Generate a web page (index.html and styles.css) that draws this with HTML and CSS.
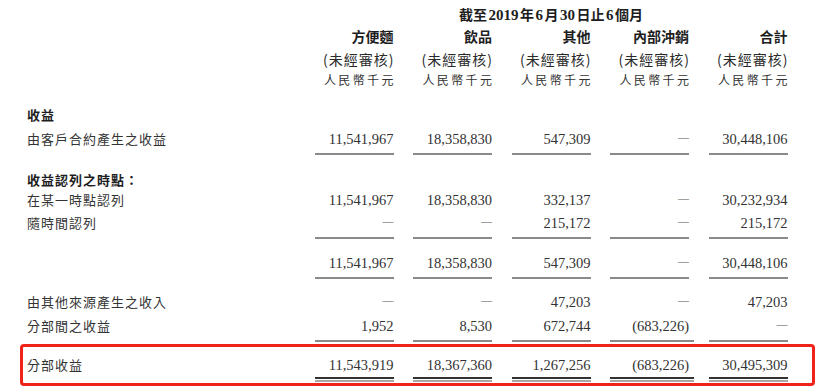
FILE: index.html
```html
<!DOCTYPE html>
<html lang="zh-Hant">
<head>
<meta charset="utf-8">
<title>分部收益</title>
<link rel="stylesheet" href="styles.css">
</head>
<body>
<div class="sheet">
  <div class="row r-title">
    <div class="title">截至<span class="num">2019</span>年<span class="num">6</span>月<span class="num">30</span>日止<span class="num">6</span>個月</div>
  </div>
  <div class="row r-h1">
    <div></div>
    <div class="hd">方便麵</div>
    <div class="hd">飲品</div>
    <div class="hd">其他</div>
    <div class="hd">內部沖銷</div>
    <div class="hd">合計</div>
  </div>
  <div class="row r-h2">
    <div></div>
    <div class="sub">(未經審核)</div>
    <div class="sub">(未經審核)</div>
    <div class="sub">(未經審核)</div>
    <div class="sub">(未經審核)</div>
    <div class="sub">(未經審核)</div>
  </div>
  <div class="row r-h3">
    <div></div>
    <div class="unit">人民幣千元</div>
    <div class="unit">人民幣千元</div>
    <div class="unit">人民幣千元</div>
    <div class="unit">人民幣千元</div>
    <div class="unit">人民幣千元</div>
  </div>

  <div class="row r1">
    <div class="lbl b">收益</div>
  </div>
  <div class="row r2">
    <div class="lbl">由客戶合約產生之收益</div>
    <div class="n u">11,541,967</div>
    <div class="n u">18,358,830</div>
    <div class="n u">547,309</div>
    <div class="n u"><span class="dash">—</span></div>
    <div class="n u">30,448,106</div>
  </div>

  <div class="row r3">
    <div class="lbl b">收益認列之時點：</div>
  </div>
  <div class="row r4">
    <div class="lbl">在某一時點認列</div>
    <div class="n">11,541,967</div>
    <div class="n">18,358,830</div>
    <div class="n">332,137</div>
    <div class="n"><span class="dash">—</span></div>
    <div class="n">30,232,934</div>
  </div>
  <div class="row r5">
    <div class="lbl">隨時間認列</div>
    <div class="n u"><span class="dash">—</span></div>
    <div class="n u"><span class="dash">—</span></div>
    <div class="n u">215,172</div>
    <div class="n u"><span class="dash">—</span></div>
    <div class="n u">215,172</div>
  </div>

  <div class="row r6">
    <div class="lbl"></div>
    <div class="n u">11,541,967</div>
    <div class="n u">18,358,830</div>
    <div class="n u">547,309</div>
    <div class="n u"><span class="dash">—</span></div>
    <div class="n u">30,448,106</div>
  </div>

  <div class="row r7">
    <div class="lbl">由其他來源產生之收入</div>
    <div class="n"><span class="dash">—</span></div>
    <div class="n"><span class="dash">—</span></div>
    <div class="n">47,203</div>
    <div class="n"><span class="dash">—</span></div>
    <div class="n">47,203</div>
  </div>
  <div class="row r8">
    <div class="lbl">分部間之收益</div>
    <div class="n u">1,952</div>
    <div class="n u">8,530</div>
    <div class="n u">672,744</div>
    <div class="n u neg">(683,226)</div>
    <div class="n u"><span class="dash">—</span></div>
  </div>

  <div class="highlight">
    <div class="row r9">
      <div class="lbl">分部收益</div>
      <div class="n uu">11,543,919</div>
      <div class="n uu">18,367,360</div>
      <div class="n uu">1,267,256</div>
      <div class="n uu neg">(683,226)</div>
      <div class="n uu">30,495,309</div>
    </div>
  </div>
</div>
</body>
</html>
```

FILE: styles.css
```css
html, body {
  margin: 0;
  padding: 0;
  background: #ffffff;
}

body {
  width: 831px;
  height: 388px;
  overflow: hidden;
  font-family: "Noto Sans CJK TC", "Noto Sans", sans-serif;
  color: #2a2a2a;
}

.sheet {
  padding: 4px 0 0 27px;
}

.row {
  display: grid;
  grid-template-columns: 268px repeat(5, 79px);
  column-gap: 19.5px;
  line-height: 20px;
}

.row > div {
  height: 20px;
  white-space: nowrap;
}

.title {
  grid-column: 2 / 7;
  text-align: center;
  font-weight: bold;
  font-size: 14px;
  color: #1e1e1e;
}

.title .num {
  font-family: "Liberation Serif", serif;
  font-size: 15px;
  line-height: 0;
  padding: 0 1.5px;
}

.hd {
  text-align: right;
  font-weight: bold;
  font-size: 14px;
  color: #1e1e1e;
}

.sub {
  text-align: right;
  font-size: 14px;
  letter-spacing: 1px;
  margin-right: -1px;
  color: #2a2a2a;
}

.unit {
  text-align: right;
  font-size: 12px;
  letter-spacing: 2.4px;
  margin-right: -2.4px;
  color: #333;
}

.lbl {
  font-size: 13px;
  letter-spacing: 1px;
  color: #333;
}

.lbl.b {
  font-weight: bold;
  color: #1e1e1e;
}

.n {
  text-align: right;
  font-family: "Liberation Serif", serif;
  font-size: 14.5px;
  color: #333;
}

.n.neg {
  margin-right: -5px;
}

.dash {
  font-size: 11px;
  line-height: 0;
  vertical-align: 3px;
  color: #555;
}

.row > .u {
  height: 20px;
  padding-bottom: 4px;
  border-bottom: 2px solid #8a8a8a;
}

.n.neg.u,
.n.neg.uu {
  padding-right: 5px;
}

.row > .uu {
  height: 20px;
  padding-bottom: 2px;
  border-bottom: 2px solid #333;
  box-shadow: 0 1px 0 #ffffff, 0 3px 0 #a8a8a8;
}

.r-title { margin-top: 0; }
.r-h1 { margin-top: 2px; }
.r-h2 { margin-top: 3px; }
.r-h3 { margin-top: 1px; }
.r1 { margin-top: 15px; }
.r2 { margin-top: 4px; }
.r3 { margin-top: 15px; }
.r4 { margin-top: 0; }
.r5 { margin-top: 3px; }
.r6 { margin-top: 14px; }
.r7 { margin-top: 13px; }
.r8 { margin-top: 4px; }

.highlight {
  margin: 2px 0 0 -7px;
  width: 785px;
  padding: 8px 0 4px 4px;
  border: 3px solid #f0231b;
  border-radius: 4px;
}
```
